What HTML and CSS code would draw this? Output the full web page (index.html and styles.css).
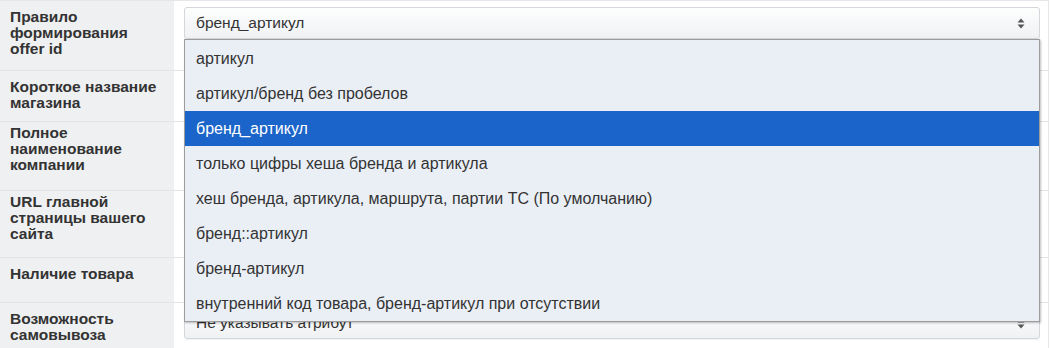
FILE: index.html
```html
<!DOCTYPE html>
<html lang="ru">
<head>
<meta charset="utf-8">
<title>Настройки выгрузки</title>
<link rel="stylesheet" href="styles.css">
</head>
<body>
<table class="settings">
  <tr class="row row-a">
    <td class="label">Правило формирования offer id</td>
    <td class="value">
      <div class="select open">
        <span class="select-text">бренд_артикул</span>
        <svg class="arrows" width="8" height="11" viewBox="0 0 8 11"><path d="M4 0.5 L7.5 4.5 H0.5 Z M4 10.5 L7.5 6.5 H0.5 Z" fill="#555"/></svg>
        <ul class="dropdown">
          <li class="option">артикул</li>
          <li class="option">артикул/бренд без пробелов</li>
          <li class="option selected">бренд_артикул</li>
          <li class="option">только цифры хеша бренда и артикула</li>
          <li class="option">хеш бренда, артикула, маршрута, партии ТС (По умолчанию)</li>
          <li class="option">бренд::артикул</li>
          <li class="option">бренд-артикул</li>
          <li class="option">внутренний код товара, бренд-артикул при отсутствии</li>
        </ul>
      </div>
    </td>
  </tr>
  <tr class="row row-b">
    <td class="label">Короткое название магазина</td>
    <td class="value"><div class="input"></div></td>
  </tr>
  <tr class="row row-c">
    <td class="label">Полное наименование компании</td>
    <td class="value"><div class="input"></div></td>
  </tr>
  <tr class="row row-d">
    <td class="label">URL главной страницы вашего сайта</td>
    <td class="value"><div class="input"></div></td>
  </tr>
  <tr class="row row-e">
    <td class="label">Наличие товара</td>
    <td class="value"><div class="input"></div></td>
  </tr>
  <tr class="row row-f">
    <td class="label">Возможность самовывоза</td>
    <td class="value">
      <div class="select">
        <span class="select-text">Не указывать атрибут</span>
        <svg class="arrows" width="8" height="11" viewBox="0 0 8 11"><path d="M4 0.5 L7.5 4.5 H0.5 Z M4 10.5 L7.5 6.5 H0.5 Z" fill="#555"/></svg>
      </div>
    </td>
  </tr>
</table>
</body>
</html>
```

FILE: styles.css
```css
html, body {
  margin: 0;
  padding: 0;
  background: #ffffff;
}

body {
  font-family: "Liberation Sans", Arial, sans-serif;
  color: #333;
  overflow: hidden;
}

.settings {
  width: 1049px;
  border-collapse: collapse;
  border-top: 1px solid #e6e7e9;
  border-right: 1px solid #e6e7e9;
}

.row {
  border-bottom: 1px solid #e2e4e7;
}

.row-a { height: 70px; }
.row-b { height: 51px; }
.row-c { height: 69px; }
.row-d { height: 67px; }
.row-e { height: 45px; }
.row-f { height: 60px; }

.label {
  width: 154px;
  padding: 8px 10px 4px 10px;
  background: #eff0f2;
  font-weight: bold;
  font-size: 15.5px;
  line-height: 16px;
  vertical-align: top;
  color: #333;
}

.row-c .label,
.row-d .label {
  padding-top: 3px;
}

.value {
  padding: 6px 8px 0 10px;
  vertical-align: top;
}

.row-f .value {
  padding-top: 4px;
}

.select,
.input {
  position: relative;
  height: 32px;
  box-sizing: border-box;
  border: 1px solid #d4d7db;
  border-radius: 3px;
  background: linear-gradient(#fefefe, #eff1f3);
  box-shadow: 0 1px 1px rgba(0, 0, 0, 0.06);
  display: flex;
  align-items: center;
  padding: 0 11px;
}

.input {
  background: #fff;
}

.select-text {
  flex: 1;
  font-size: 15.5px;
  color: #333;
}

.arrows {
  margin-right: 3px;
}

.dropdown {
  position: absolute;
  top: 31px;
  left: -1px;
  right: -1px;
  margin: 0;
  padding: 1px 0 0;
  list-style: none;
  background: #eaeff6;
  border: 1px solid #9c9c9c;
  box-shadow: 1px 1px 2px rgba(0, 0, 0, 0.25);
  z-index: 5;
}

.option {
  height: 35px;
  line-height: 35px;
  padding-left: 11px;
  font-size: 16px;
  color: #333;
}

.option.selected {
  background: #1b64c9;
  color: #fff;
}
```
